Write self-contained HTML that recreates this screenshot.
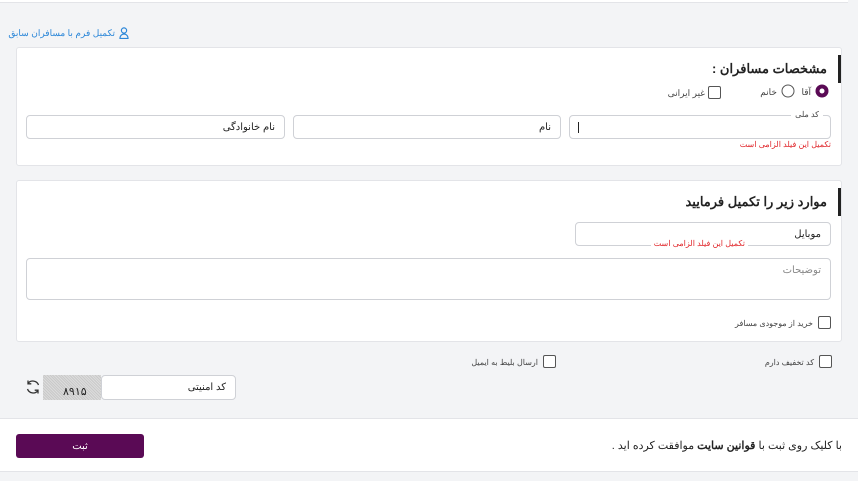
<!DOCTYPE html>
<html><head><meta charset="utf-8"><style>
*{box-sizing:border-box;margin:0;padding:0}
body{width:858px;height:481px;background:#f3f4f6;font-family:"Liberation Sans","Noto Sans CJK SC",sans-serif;position:relative;overflow:hidden;color:#222;direction:rtl}
.a{position:absolute}
.card{position:absolute;left:16px;width:826px;background:#fff;border:1px solid #e3e4e8;border-radius:3px}
.inp{position:absolute;background:#fff;border:1px solid #cfd1d6;border-radius:4px;font-size:10px;padding-right:9px;display:flex;align-items:center}
.cb{position:absolute;width:13px;height:13px;border:1px solid #555;border-radius:2px;background:#fff}
.t{position:absolute;font-size:9px;white-space:nowrap;color:#444}
.err{position:absolute;font-size:8px;color:#e0262b;white-space:nowrap}
.h{position:absolute;font-size:13px;font-weight:bold;white-space:nowrap;color:#222}
.bar{position:absolute;right:0;width:3px;height:28px;background:#222}
</style></head><body>
<div class="a" style="left:0;top:0;width:848px;height:3px;background:#fff;border-bottom:1px solid #e3e4e8"></div>
<div class="t" style="right:743px;top:28px;color:#2a86d8;font-size:9px">تکمیل فرم با مسافران سابق</div>
<svg class="a" style="left:119px;top:27px" width="10" height="12" viewBox="0 0 10 12"><circle cx="5" cy="3.5" r="2.6" fill="none" stroke="#2a86d8" stroke-width="1.2"/><path d="M1 11.5c0-3 2-4.5 4-4.5s4 1.5 4 4.5z" fill="none" stroke="#2a86d8" stroke-width="1.2"/></svg>

<div class="card" style="top:47px;height:119px">
 <div class="bar" style="top:7px"></div>
 <div class="h" style="right:14px;top:13px">مشخصات مسافران :</div>
 <svg class="a" style="right:12px;top:36px" width="14" height="14"><circle cx="7" cy="7" r="6.5" fill="#5a0a55"/><circle cx="7" cy="7" r="2.5" fill="#fff"/></svg>
 <div class="t" style="right:30px;top:39px">آقا</div>
 <svg class="a" style="right:46px;top:36px" width="14" height="14"><circle cx="7" cy="7" r="6" fill="#fff" stroke="#555"/></svg>
 <div class="t" style="right:64px;top:39px">خانم</div>
 <div class="cb" style="right:120px;top:38px"></div>
 <div class="t" style="right:136px;top:40px">غیر ایرانی</div>
 <div class="inp" style="right:10px;top:67px;width:262px;height:24px;justify-content:flex-end;padding-left:8px"><span style="width:1px;height:11px;background:#222;display:block"></span></div>
 <div class="t" style="right:18px;top:62px;background:#fff;padding:0 4px;font-size:8px">کد ملی</div>
 <div class="err" style="right:10px;top:92px">تکمیل این فیلد الزامی است</div>
 <div class="inp" style="right:280px;top:67px;width:268px;height:24px">نام</div>
 <div class="inp" style="right:556px;top:67px;width:259px;height:24px">نام خانوادگی</div>
</div>

<div class="card" style="top:180px;height:162px">
 <div class="bar" style="top:7px"></div>
 <div class="h" style="right:14px;top:13px">موارد زیر را تکمیل فرمایید</div>
 <div class="inp" style="right:10px;top:41px;width:256px;height:24px">موبایل</div>
 <div class="err" style="right:93px;top:58px;background:#fff;padding:0 3px">تکمیل این فیلد الزامی است</div>
 <div class="inp" style="right:10px;top:77px;width:805px;height:42px;align-items:flex-start;padding-top:6px;color:#888">توضیحات</div>
 <div class="cb" style="right:10px;top:135px"></div>
 <div class="t" style="right:28px;top:138px;font-size:8px">خرید از موجودی مسافر</div>
</div>

<div class="cb" style="right:26px;top:355px"></div>
<div class="t" style="right:44px;top:358px;font-size:8px">کد تخفیف دارم</div>
<div class="cb" style="right:302px;top:355px"></div>
<div class="t" style="right:320px;top:358px;font-size:8px">ارسال بلیط به ایمیل</div>

<div class="inp" style="left:101px;top:375px;width:135px;height:25px">کد امنیتی</div>
<div class="a" style="left:43px;top:375px;width:58px;height:25px;background:repeating-linear-gradient(45deg,#c9c9c9 0 1px,#dcdcdc 1px 2px);font-size:11px;direction:ltr;padding:10px 0 0 20px;color:#222">۸۹۱۵</div>
<svg class="a" style="left:25px;top:379px" width="16" height="16" viewBox="0 0 16 16"><path d="M13.5 6A6 6 0 0 0 3 4.5M2.5 10A6 6 0 0 0 13 11.5" fill="none" stroke="#333" stroke-width="1.3"/><path d="M3 1.5v3.3h3.3M13 14.5v-3.3H9.7" fill="none" stroke="#333" stroke-width="1.3"/></svg>

<div class="a" style="left:0;top:418px;width:858px;height:54px;background:#fff;border-top:1px solid #e3e4e8;border-bottom:1px solid #e3e4e8"></div>
<div class="a" style="left:16px;top:434px;width:128px;height:24px;background:#5a0a55;border-radius:3px;color:#fff;font-size:10px;display:flex;align-items:center;justify-content:center">ثبت</div>
<div class="t" style="right:16px;top:439px;font-size:11px;color:#222">با کلیک روی ثبت با <b>قوانین سایت</b> موافقت کرده اید .</div>
</body></html>
